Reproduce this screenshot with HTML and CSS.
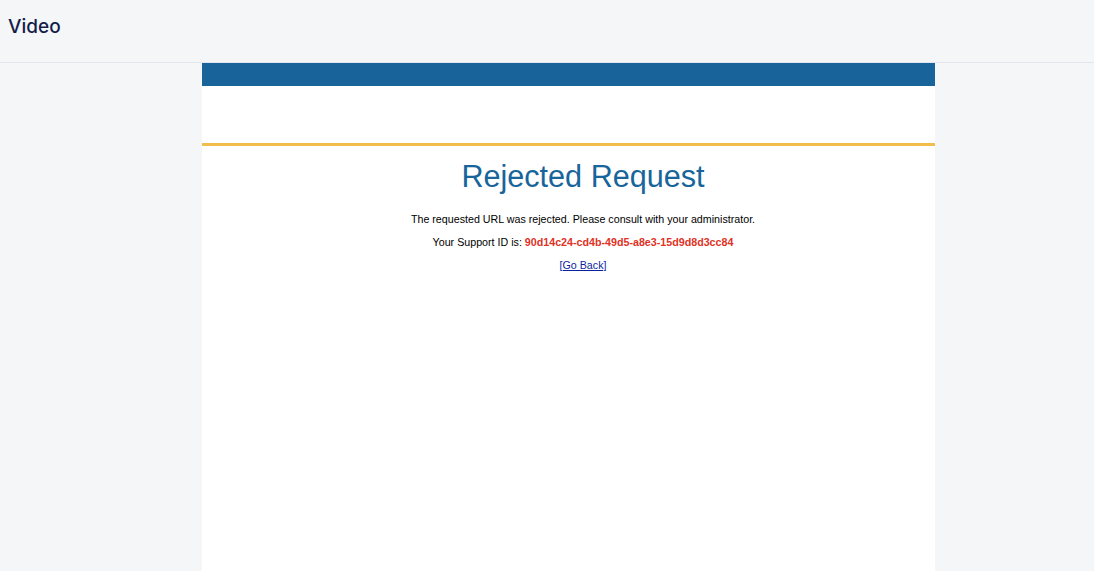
FILE: index.html
```html
<!DOCTYPE html>
<html>
<head>
<meta charset="utf-8">
<link rel="stylesheet" href="styles.css">
</head>
<body>
<header class="topbar">
  <h1 class="page-title">Video</h1>
</header>
<main class="main">
  <section class="frame">
    <div class="brand-bar"></div>
    <div class="banner"></div>
    <div class="message">
      <h2 class="msg-title">Rejected Request</h2>
      <p class="msg-text">The requested URL was rejected. Please consult with your administrator.</p>
      <p class="msg-text">Your Support ID is: <span class="support-id">90d14c24-cd4b-49d5-a8e3-15d9d8d3cc84</span></p>
      <p class="msg-text"><a class="back-link" href="#">[Go Back]</a></p>
    </div>
  </section>
</main>
</body>
</html>
```
FILE: styles.css
```css
html, body {
  margin: 0;
  padding: 0;
  height: 100%;
}
body {
  background: #f5f6f8;
  font-family: Inter, "Liberation Sans", sans-serif;
  overflow: hidden;
}
.topbar {
  height: 62px;
  border-bottom: 1px solid #e3e6ef;
  display: flex;
  align-items: center;
  padding-left: 8px;
  box-sizing: content-box;
}
.page-title {
  margin: 0;
  font-family: Inter, sans-serif;
  font-size: 19px;
  font-weight: 500;
  color: #141d4a;
  position: relative;
  top: -5px;
}
.main {
  display: flex;
  justify-content: flex-start;
  padding-left: 202px;
}
.frame {
  width: 733px;
  height: 520px;
  background: #ffffff;
  overflow: hidden;
}
.brand-bar {
  height: 23px;
  background: #18639a;
}
.banner {
  height: 57px;
  border-bottom: 3px solid #f1bd4c;
}
.message {
  width: 762px;
  text-align: center;
  font-family: "Liberation Sans", Arial, sans-serif;
  color: #000;
  padding-top: 13px;
}
.msg-title {
  margin: 0 0 20px;
  font-size: 30.6px;
  font-weight: normal;
  color: #17659a;
  line-height: 34px;
}
.msg-text {
  font-size: 10.7px;
  line-height: 12.6px;
  margin: 0 0 10.6px;
}
.support-id {
  color: #e0321f;
  font-weight: bold;
}
.back-link {
  color: #0b1fa0;
}
```
